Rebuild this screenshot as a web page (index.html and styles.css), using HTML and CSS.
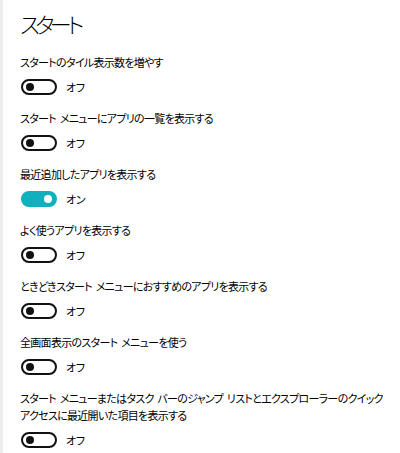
FILE: index.html
```html
<!DOCTYPE html>
<html lang="ja">
<head>
<meta charset="utf-8">
<link rel="stylesheet" href="styles.css">
</head>
<body>
<div class="page">
  <h1 class="title">スタート</h1>
  <div class="item">
    <div class="label">スタートのタイル表示数を増やす</div>
    <div class="row"><span class="toggle"></span><span class="state">オフ</span></div>
  </div>
  <div class="item">
    <div class="label">スタート メニューにアプリの一覧を表示する</div>
    <div class="row"><span class="toggle"></span><span class="state">オフ</span></div>
  </div>
  <div class="item">
    <div class="label">最近追加したアプリを表示する</div>
    <div class="row"><span class="toggle on"></span><span class="state">オン</span></div>
  </div>
  <div class="item">
    <div class="label">よく使うアプリを表示する</div>
    <div class="row"><span class="toggle"></span><span class="state">オフ</span></div>
  </div>
  <div class="item">
    <div class="label">ときどきスタート メニューにおすすめのアプリを表示する</div>
    <div class="row"><span class="toggle"></span><span class="state">オフ</span></div>
  </div>
  <div class="item">
    <div class="label">全画面表示のスタート メニューを使う</div>
    <div class="row"><span class="toggle"></span><span class="state">オフ</span></div>
  </div>
  <div class="item">
    <div class="label">スタート メニューまたはタスク バーのジャンプ リストとエクスプローラーのクイック<br>アクセスに最近開いた項目を表示する</div>
    <div class="row"><span class="toggle"></span><span class="state">オフ</span></div>
  </div>
</div>
</body>
</html>
```
FILE: styles.css
```css
html, body {
  margin: 0;
  padding: 0;
  background: #ffffff;
}
body {
  font-family: "Noto Sans CJK JP", "Noto Sans", sans-serif;
  font-feature-settings: "palt";
  color: #000;
  border-left: 3px solid #ededed;
  height: 453px;
  overflow: hidden;
  box-sizing: border-box;
}
.page {
  padding: 8px 0 0 17px;
}
.title {
  margin: 0 0 16px 0;
  font-size: 22px;
  line-height: 30px;
  font-weight: 300;
  letter-spacing: -4.5px;
}
.item {
  margin-bottom: 13px;
}
.label {
  font-size: 11px;
  line-height: 17px;
  letter-spacing: -0.7px;
  word-spacing: 2px;
  margin-bottom: 6px;
  white-space: nowrap;
}
.row {
  display: flex;
  align-items: center;
  height: 20px;
}
.toggle {
  box-sizing: border-box;
  width: 36px;
  height: 16px;
  border: 2px solid #111;
  border-radius: 8px;
  display: flex;
  align-items: center;
  padding: 0 3px;
  margin-left: 1px;
}
.toggle::after {
  content: "";
  width: 8px;
  height: 8px;
  border-radius: 50%;
  background: #111;
}
.toggle.on {
  background: #10b0bf;
  border-color: #10b0bf;
  justify-content: flex-end;
}
.toggle.on::after {
  background: #fff;
}
.state {
  font-size: 11px;
  letter-spacing: -0.3px;
  margin-left: 9px;
}
```
